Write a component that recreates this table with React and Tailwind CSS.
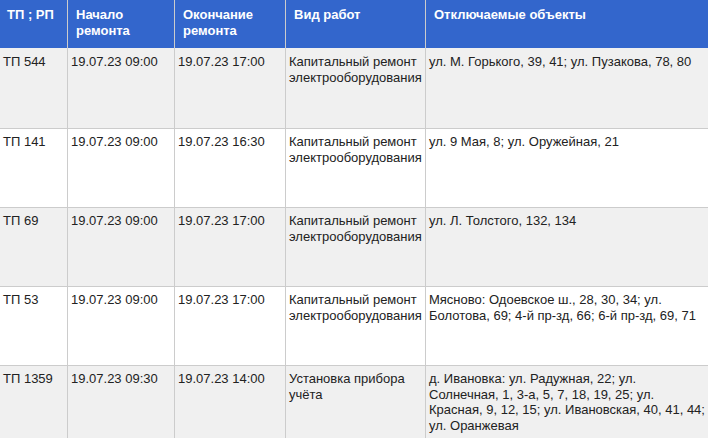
import React from "react";

const rows = [
  {
    tp: "ТП 544",
    start: "19.07.23 09:00",
    end: "19.07.23 17:00",
    work: "Капитальный ремонт электрооборудования",
    obj: "ул. М. Горького, 39, 41; ул. Пузакова, 78, 80",
    h: "h-[81px]",
    bg: "bg-[#f0f0f0]",
    pt: "pt-[6px]",
  },
  {
    tp: "ТП 141",
    start: "19.07.23 09:00",
    end: "19.07.23 16:30",
    work: "Капитальный ремонт электрооборудования",
    obj: "ул. 9 Мая, 8; ул. Оружейная, 21",
    h: "h-[79px]",
    bg: "bg-white",
    pt: "pt-[5px]",
  },
  {
    tp: "ТП 69",
    start: "19.07.23 09:00",
    end: "19.07.23 17:00",
    work: "Капитальный ремонт электрооборудования",
    obj: "ул. Л. Толстого, 132, 134",
    h: "h-[79px]",
    bg: "bg-[#f0f0f0]",
    pt: "pt-[5px]",
  },
  {
    tp: "ТП 53",
    start: "19.07.23 09:00",
    end: "19.07.23 17:00",
    work: "Капитальный ремонт электрооборудования",
    obj: "Мясново: Одоевское ш., 28, 30, 34; ул. Болотова, 69; 4-й пр-зд, 66; 6-й пр-зд, 69, 71",
    h: "h-[79px]",
    bg: "bg-white",
    pt: "pt-[5px]",
  },
  {
    tp: "ТП 1359",
    start: "19.07.23 09:30",
    end: "19.07.23 14:00",
    work: "Установка прибора учёта",
    obj: "д. Ивановка: ул. Радужная, 22; ул. Солнечная, 1, 3-а, 5, 7, 18, 19, 25; ул. Красная, 9, 12, 15; ул. Ивановская, 40, 41, 44; ул. Оранжевая",
    h: "min-h-[79px]",
    bg: "bg-[#f0f0f0]",
    pt: "pt-[5px]",
  },
];

const cols = "grid grid-cols-[68px_107px_111px_140px_1fr]";

export default function App() {
  return (
    <div
      className="w-[708px] h-[438px] overflow-hidden bg-white text-[13px] leading-[15.5px] text-[#222]"
      style={{ fontFamily: '"Liberation Sans", Arial, sans-serif' }}
    >
      <div className={`${cols} h-[48px] bg-[#3366cc] text-white font-bold`}>
        <div className="border-r border-[#ccc] pl-[7px] pr-1 pt-[7px]">ТП ; РП</div>
        <div className="border-r border-[#ccc] pl-[8px] pr-1 pt-[7px]">Начало<br />ремонта</div>
        <div className="border-r border-[#ccc] pl-[8px] pr-1 pt-[7px]">Окончание<br />ремонта</div>
        <div className="border-r border-[#ccc] pl-[8px] pr-1 pt-[7px]">Вид работ</div>
        <div className="pl-[8px] pr-1 pt-[7px]">Отключаемые объекты</div>
      </div>
      {rows.map((r, i) => (
        <div key={i} className={`${cols} ${r.h} ${r.bg} border-b border-[#ccc]`}>
          <div className={`border-r border-[#ccc] pl-[3px] pr-[2px] ${r.pt}`}>{r.tp}</div>
          <div className={`border-r border-[#ccc] pl-[3px] pr-[2px] ${r.pt}`}>{r.start}</div>
          <div className={`border-r border-[#ccc] pl-[3px] pr-[2px] ${r.pt}`}>{r.end}</div>
          <div className={`border-r border-[#ccc] pl-[3px] pr-[1px] ${r.pt}`}>{r.work}</div>
          <div className={`pl-[3px] pr-[3px] ${r.pt}`}>{r.obj}</div>
        </div>
      ))}
    </div>
  );
}
